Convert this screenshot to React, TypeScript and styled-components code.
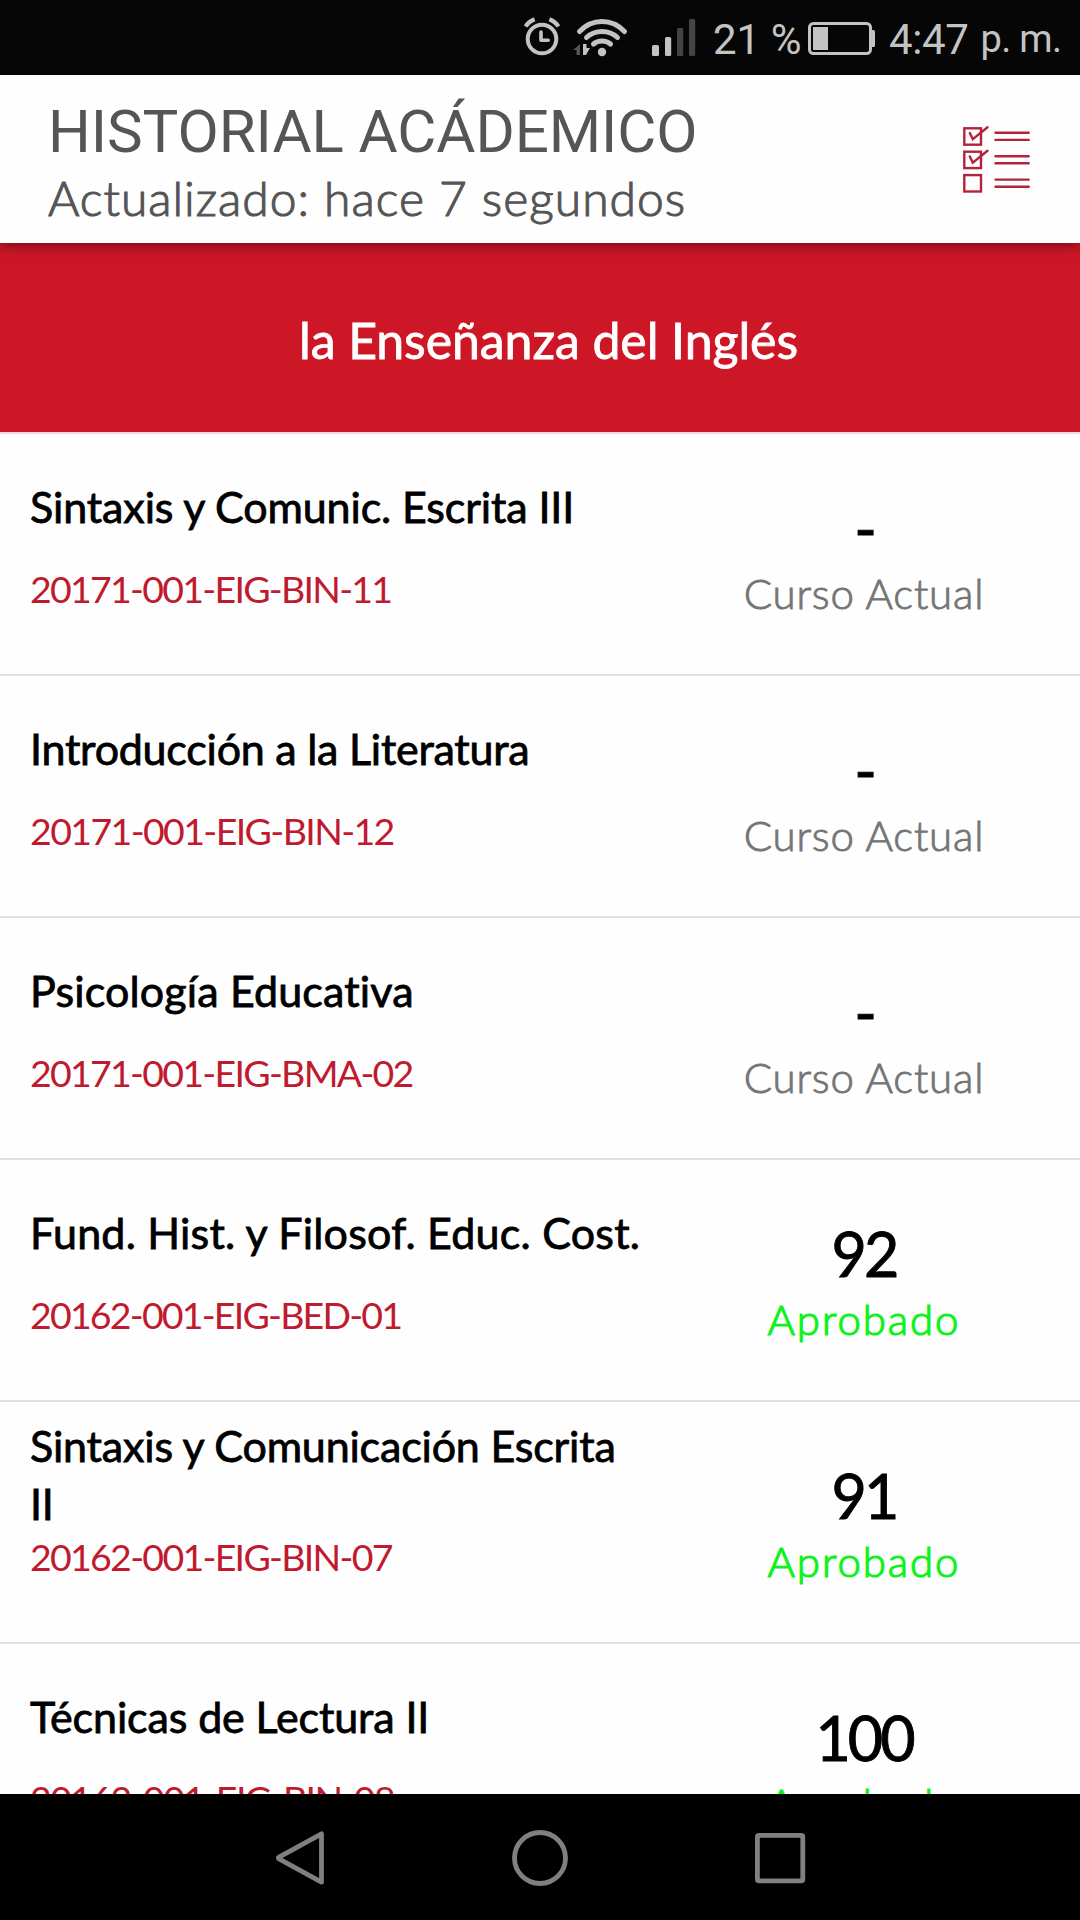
import React from "react";
import styled, { createGlobalStyle } from "styled-components";

const GlobalStyle = createGlobalStyle`
  html, body { margin: 0; padding: 0; background: #fff; }
  * { box-sizing: border-box; }
`;

const Screen = styled.div`
  display: flex;
  flex-direction: column;
  width: 1080px;
  height: 1920px;
  overflow: hidden;
  background: #fefefe;
  font-family: Lato, "Open Sans", sans-serif;
  font-variant-ligatures: none;
`;

const StatusBar = styled.div`
  display: flex;
  flex: none;
  align-items: center;
  height: 75px;
  padding-left: 520px;
  background: #060606;
  color: #c3c3c3;
  font: 400 42px/50px Roboto, sans-serif;
  white-space: pre;

  svg {
    flex: none;
    display: block;
  }
`;

const BatteryText = styled.span`
  width: 91px;
  margin-left: 13px;
  padding-top: 5px;
`;

const Clock = styled.span`
  margin-left: 13px;
  padding-top: 5px;
  letter-spacing: -0.4px;
`;

const Meridiem = styled.span`
  margin-left: 12px;
  padding-top: 3px;
  font-size: 38px;
  letter-spacing: -0.6px;
`;

const Header = styled.header`
  display: flex;
  flex: none;
  justify-content: space-between;
  height: 168px;
  padding: 27px 49px 0 48px;
  background: #fefefe;
  color: #555;
  box-shadow: 0 2px 12px rgba(0, 0, 0, 0.5);
  z-index: 1;
`;

const HeaderTitle = styled.h1`
  margin: 0;
  font: 400 60px/60px Roboto, sans-serif;
  letter-spacing: -0.06px;
`;

const HeaderSubtitle = styled.div`
  margin-top: 7px;
  font-size: 48px;
  font-weight: 300;
  line-height: 58px;
  letter-spacing: 1px;
  -webkit-text-stroke: 1.1px currentColor;
`;

const ChecklistButton = styled.button`
  align-self: flex-start;
  margin: 22px 0 0;
  padding: 0;
  border: 0;
  background: none;

  svg {
    display: block;
  }
`;

const Banner = styled.div`
  display: flex;
  flex: none;
  align-items: center;
  justify-content: center;
  height: 191px;
  padding: 4px 0 0 17px;
  border-bottom: 2px solid #f6d9dc;
  background: #cd1727;
  color: #fff;
  font-size: 50px;
  line-height: 60px;
  letter-spacing: -0.08px;
  -webkit-text-stroke: 0.8px currentColor;
`;

const CourseList = styled.div`
  flex: 1;
  min-height: 0;
  overflow: hidden;
`;

const Row = styled.div`
  display: grid;
  grid-template-columns: 648px 432px;
  height: 242px;
  border-bottom: 2px solid #dfdfdf;
`;

const CourseInfo = styled.div`
  padding: 14px 0 0 30px;
`;

const CourseName = styled.div<{ $tracking: number }>`
  display: flex;
  align-items: center;
  height: 118px;
  color: #000;
  font-size: 43px;
  line-height: 58px;
  letter-spacing: ${(p) => p.$tracking}px;
  -webkit-text-stroke: 0.8px currentColor;
`;

const CourseCode = styled.div<{ $tracking: number }>`
  margin-top: 1px;
  color: #c01a2e;
  font-size: 37.5px;
  line-height: 44px;
  letter-spacing: ${(p) => p.$tracking}px;
  white-space: nowrap;
`;

const Result = styled.div`
  display: flex;
  flex-direction: column;
  align-items: center;
  padding-top: 57px;
`;

const Grade = styled.div`
  color: #000;
  font-size: 61px;
  line-height: 74px;
  letter-spacing: -3px;
  -webkit-text-stroke: 0.9px currentColor;
`;

const Status = styled.div<{ $passed: boolean }>`
  margin-top: 3px;
  color: ${(p) => (p.$passed ? "#0bf31a" : "#757575")};
  font-size: 42px;
  font-weight: 300;
  line-height: 50px;
  letter-spacing: ${(p) => (p.$passed ? 1.9 : 0.8)}px;
  -webkit-text-stroke: ${(p) => (p.$passed ? 1.2 : 0.9)}px currentColor;
`;

const NavBar = styled.nav`
  display: grid;
  flex: none;
  grid-template-columns: repeat(3, 240px);
  justify-content: center;
  justify-items: center;
  height: 126px;
  padding-top: 34px;
  background: #000;
`;

interface Course {
  name: string;
  tracking: number;
  code: string;
  codeTracking: number;
  grade?: number;
}

const courses: Course[] = [
  { name: "Sintaxis y Comunic. Escrita III", tracking: -0.12, code: "20171-001-EIG-BIN-11", codeTracking: -1.74 },
  { name: "Introducción a la Literatura", tracking: -0.24, code: "20171-001-EIG-BIN-12", codeTracking: -1.62 },
  { name: "Psicología Educativa", tracking: 0.15, code: "20171-001-EIG-BMA-02", codeTracking: -1.73 },
  { name: "Fund. Hist. y Filosof. Educ. Cost.", tracking: 0.23, code: "20162-001-EIG-BED-01", codeTracking: -1.8, grade: 92 },
  { name: "Sintaxis y Comunicación Escrita II", tracking: -0.18, code: "20162-001-EIG-BIN-07", codeTracking: -1.72, grade: 91 },
  { name: "Técnicas de Lectura II", tracking: -0.12, code: "20162-001-EIG-BIN-08", codeTracking: -1.6, grade: 100 },
];

const StatusIcons = () => (
  <svg width="180" height="75" viewBox="520 0 180 75" fill="none" stroke="#c3c3c3" strokeLinecap="round" strokeLinejoin="round">
    <circle cx="542" cy="39" r="14.3" strokeWidth="4" />
    <path d="M541 32v8.300h7.200" strokeWidth="3.600" />
    <path d="M525.600 26.500q3-4.800 9-7.200M558.400 26.500q-3-4.800-9-7.200" strokeWidth="4.200" strokeLinecap="butt" />
    <path d="M579.500 31.500Q589 21.500 602 21.500T624.500 31.500" strokeWidth="5" />
    <path d="M586.500 37.500Q593 31.500 602 31.500T617.500 37.500" strokeWidth="5" />
    <path d="M593.500 44Q597 41 602 41T610.500 44" strokeWidth="5" />
    <circle cx="602" cy="52" r="4.200" fill="#c3c3c3" stroke="none" />
    <path d="M580 44v11h-3.500v-5H573z" fill="#555" stroke="none" />
    <path d="M583 44h3.500v4h3.500l-4 7h-3z" fill="#c3c3c3" stroke="none" />
    <g stroke="none">
      <rect x="652" y="45" width="7" height="11" rx="1.500" fill="#c3c3c3" />
      <rect x="665" y="37" width="6.200" height="19" rx="1.500" fill="#c3c3c3" />
      <rect x="677" y="28" width="6.200" height="28" rx="1.500" fill="#444" />
      <rect x="689" y="19" width="6.200" height="37" rx="1.500" fill="#444" />
    </g>
  </svg>
);

const BatteryIcon = () => (
  <svg width="72" height="75" viewBox="804 0 72 75">
    <rect x="809.500" y="23.500" width="61" height="30" rx="4" fill="none" stroke="#c3c3c3" strokeWidth="3" />
    <rect x="813" y="27" width="15" height="23" fill="#c3c3c3" />
    <path d="M871 30h2.500q1.500 0 1.500 1.500v14q0 1.500-1.500 1.500H871z" fill="#c3c3c3" />
  </svg>
);

const ChecklistIcon = () => (
  <svg width="70" height="70" viewBox="961 124 70 70" fill="none" stroke="#b3243a" strokeWidth="2.400" strokeLinecap="round">
    {[0, 23.4, 46.8].map((dy, i) => (
      <g key={dy} transform={`translate(0 ${dy})`}>
        <rect x="964.300" y="128.300" width="16.700" height="16.400" />
        <path d="M995.500 132.800h33.200M995.500 139.900h33.200" />
        {i < 2 && <path d="M969.800 133l3 6.200L987.500 127.300" />}
      </g>
    ))}
  </svg>
);

const navProps = { width: 64, height: 60, fill: "none", stroke: "#808080", strokeWidth: 4.8, strokeLinejoin: "round" as const };

export default function App() {
  return (
    <Screen>
      <GlobalStyle />
      <StatusBar>
        <StatusIcons />
        <BatteryText>21 %</BatteryText>
        <BatteryIcon />
        <Clock>4:47</Clock>
        <Meridiem>p. m.</Meridiem>
      </StatusBar>
      <Header>
        <div>
          <HeaderTitle>HISTORIAL ACÁDEMICO</HeaderTitle>
          <HeaderSubtitle>Actualizado: hace 7 segundos</HeaderSubtitle>
        </div>
        <ChecklistButton aria-label="Lista">
          <ChecklistIcon />
        </ChecklistButton>
      </Header>
      <Banner>la Enseñanza del Inglés</Banner>
      <CourseList>
        {courses.map((c) => (
          <Row key={c.code}>
            <CourseInfo>
              <CourseName $tracking={c.tracking}>{c.name}</CourseName>
              <CourseCode $tracking={c.codeTracking}>{c.code}</CourseCode>
            </CourseInfo>
            <Result>
              <Grade>{c.grade ?? "-"}</Grade>
              <Status $passed={c.grade !== undefined}>{c.grade !== undefined ? "Aprobado" : "Curso Actual"}</Status>
            </Result>
          </Row>
        ))}
      </CourseList>
      <NavBar>
        <svg {...navProps} viewBox="268 1828 64 60">
          <path d="M321.500 1833.800V1882.200L279 1858.800Q277.600 1858 279 1857.200Z" />
        </svg>
        <svg {...navProps} viewBox="508 1828 64 60">
          <circle cx="540" cy="1858" r="25.500" />
        </svg>
        <svg {...navProps} viewBox="748 1828 64 60">
          <rect x="757.400" y="1835.400" width="45.400" height="45.400" rx="1.500" />
        </svg>
      </NavBar>
    </Screen>
  );
}
